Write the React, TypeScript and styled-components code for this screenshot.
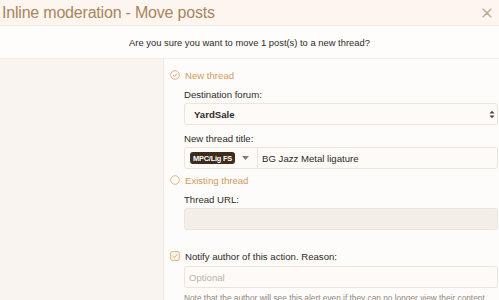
import { FC } from 'react';
import { styled, createGlobalStyle } from 'styled-components';

const Global = createGlobalStyle`
	html, body {
		margin: 0;
		padding: 0;
		background: #fefcfa;
		font-family: 'Liberation Sans', Arial, sans-serif;
	}
`;

const App: FC = () => (
	<>
		<Global />
		<Overlay>
			<Header>
				<h2>Inline moderation - Move posts</h2>
				<Close aria-label="close">
					<svg width="10" height="10" viewBox="0 0 10 10">
						<path d="M1.2 1.2 L8.8 8.8 M8.8 1.2 L1.2 8.8" stroke="currentColor" strokeWidth="1.6" strokeLinecap="round" />
					</svg>
				</Close>
			</Header>
			<Message>Are you sure you want to move 1 post(s) to a new thread?</Message>
			<FormRow>
				<LabelCol />
				<Controls>
					<Choice>
						<RadioIcon checked />
						<span>New thread</span>
					</Choice>
					<Nested>
						<FieldLabel>Destination forum:</FieldLabel>
						<Select>
							<span>YardSale</span>
							<svg width="6" height="9" viewBox="0 0 6 9">
								<path d="M0.5 3.5 L3 0.8 L5.5 3.5 Z M0.5 5.5 L3 8.2 L5.5 5.5 Z" fill="#444" />
							</svg>
						</Select>
						<FieldLabel>New thread title:</FieldLabel>
						<Input>
							<Prefix>
								<Badge>MPC/Lig FS</Badge>
								<svg width="7" height="4" viewBox="0 0 7 4">
									<path d="M0 0 L7 0 L3.5 4 Z" fill="#8a7a6a" />
								</svg>
							</Prefix>
							<Value>BG Jazz Metal ligature</Value>
						</Input>
					</Nested>
					<Choice>
						<RadioIcon />
						<span>Existing thread</span>
					</Choice>
					<Nested>
						<FieldLabel>Thread URL:</FieldLabel>
						<Input disabled />
					</Nested>
					<Notify>
						<CheckIcon />
						<span>Notify author of this action. Reason:</span>
					</Notify>
					<Nested top={4}>
						<Input>
							<Placeholder>Optional</Placeholder>
						</Input>
						<Hint>Note that the author will see this alert even if they can no longer view their content.</Hint>
					</Nested>
				</Controls>
			</FormRow>
		</Overlay>
	</>
);

const RadioIcon: FC<{ checked?: boolean }> = ({ checked }) => (
	<svg width="10" height="10" viewBox="0 0 10 10">
		<circle cx="5" cy="5" r="4.3" fill="none" stroke="#e2b584" strokeWidth="1" />
		{checked && <path d="M3 5.1 L4.4 6.4 L7 3.6" fill="none" stroke="#d9a66c" strokeWidth="1" />}
	</svg>
);

const CheckIcon: FC = () => (
	<svg width="10" height="10" viewBox="0 0 10 10">
		<rect x="0.6" y="0.6" width="8.8" height="8.8" rx="1.5" fill="#fdf3e8" stroke="#e2b584" strokeWidth="1" />
		<path d="M2.7 5.1 L4.3 6.6 L7.3 3.4" fill="none" stroke="#d9a66c" strokeWidth="1" />
	</svg>
);

export default App;

const Overlay = styled.div`
	display: flex;
	flex-direction: column;
	width: 499px;
	height: 300px;
	overflow: hidden;
	background: #fefcfa;

	& > * {
		flex-shrink: 0;
	}
`;

const Header = styled.div`
	display: flex;
	align-items: center;
	justify-content: space-between;
	height: 25px;
	padding: 0 7px 0 2px;
	background: #fdf6f0;
	border-bottom: 1px solid #f5e9de;

	& > h2 {
		margin: 0;
		font-size: 16px;
		font-weight: 400;
		color: #a9845d;
		letter-spacing: -0.2px;
	}
`;

const Close = styled.span`
	display: flex;
	color: #bcae9e;
`;

const Message = styled.div`
	height: 32px;
	line-height: 34px;
	text-align: center;
	font-size: 9.4px;
	color: #2e2a26;
	background: #fffdfc;
	border-bottom: 1px solid #f7efe7;
`;

const FormRow = styled.div`
	display: flex;
	flex: 1 0 auto;
`;

const LabelCol = styled.div`
	width: 163px;
	flex-shrink: 0;
	background: #f9f4ef;
	border-right: 1px solid #f1e7dd;
`;

const Controls = styled.div`
	display: flex;
	flex-direction: column;
	flex: 1;
	min-width: 0;
	padding: 10px 1px 0 6px;
`;

const Choice = styled.label`
	display: flex;
	align-items: center;
	gap: 5px;
	height: 12px;
	font-size: 9.6px;
	color: #d09a5c;
`;

const Notify = styled(Choice)`
	margin-top: 15px;
	color: #2e2a26;
`;

const Nested = styled.div<{ top?: number }>`
	display: flex;
	flex-direction: column;
	padding: ${({ top = 0 }) => top}px 0 0 14px;
	margin-bottom: 5px;
`;

const FieldLabel = styled.div`
	font-size: 9.6px;
	line-height: 11px;
	color: #2e2a26;
	margin: 8px 0 3px;
`;

const Select = styled.div`
	display: flex;
	align-items: center;
	justify-content: space-between;
	height: 20px;
	padding: 0 2px 0 9px;
	border: 1px solid #efe4d9;
	border-radius: 3px;
	background: #fdfaf7;
	font-size: 9.6px;
	font-weight: 700;
	color: #2e2a26;
`;

const Input = styled.div<{ disabled?: boolean }>`
	display: flex;
	align-items: center;
	height: 20px;
	border: 1px solid #efe4d9;
	border-radius: 3px;
	background: ${({ disabled }) => (disabled ? '#f4eee8' : '#fdfaf7')};
	font-size: 9.6px;
	color: #2e2a26;
`;

const Prefix = styled.div`
	display: flex;
	align-items: center;
	gap: 7px;
	height: 100%;
	padding: 0 8px 0 5px;
	border-right: 1px solid #efe4d9;
`;

const Badge = styled.span`
	display: inline-block;
	padding: 1.5px 3px;
	border-radius: 3px;
	background: #3e2c1c;
	color: #fff;
	font-size: 7.4px;
	font-weight: 700;
	letter-spacing: -0.2px;
`;

const Value = styled.span`
	padding-left: 4px;
`;

const Placeholder = styled.span`
	padding-left: 4px;
	color: #b9b2aa;
`;

const Hint = styled.div`
	margin-top: 5px;
	font-size: 8.3px;
	color: #8e8780;
	white-space: nowrap;
`;
